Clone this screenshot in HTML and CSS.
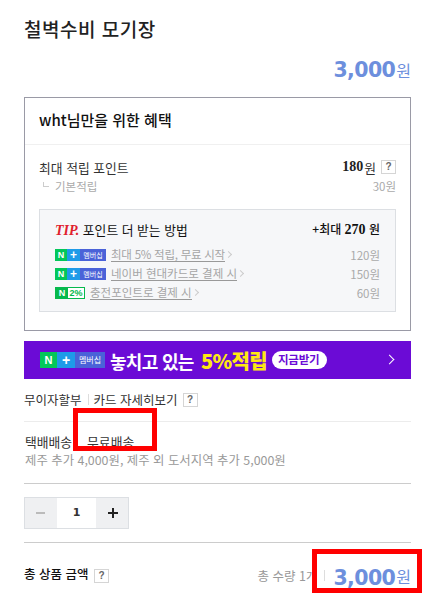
FILE: index.html
```html
<!DOCTYPE html>
<html lang="ko">
<head>
    <meta charset="UTF-8" />
    <title>철벽수비 모기장</title>
    <link rel="stylesheet" href="styles.css">
</head>
<body>
<div class="page">
    <h2 class="title">철벽수비 모기장</h2>
    <div class="price-top"><span class="num">3,000</span><span class="won">원</span></div>

    <div class="benefit">
        <div class="benefit-head">wht님만을 위한 혜택</div>
        <div class="benefit-body">
            <div class="row max-row">
                <span>최대 적립 포인트</span>
                <span class="row-right"><b class="amount">180</b>원 <i class="help">?</i></span>
            </div>
            <div class="row base-row">
                <span class="base-label"><i class="corner"></i>기본적립</span>
                <span>30원</span>
            </div>
            <div class="tip">
                <div class="row tip-head">
                    <span><em class="tip-mark">TIP.</em> 포인트 더 받는 방법</span>
                    <span class="tip-max">+최대 <b class="amount">270</b> 원</span>
                </div>
                <div class="row tip-row">
                    <span class="tip-link">
                        <span class="badge"><i class="b-n">N</i><i class="b-plus">+</i><i class="b-member">멤버십</i></span>
                        <a class="tight">최대 5% 적립, 무료 시작</a><i class="chev"></i>
                    </span>
                    <span>120원</span>
                </div>
                <div class="row tip-row">
                    <span class="tip-link">
                        <span class="badge"><i class="b-n">N</i><i class="b-plus">+</i><i class="b-member">멤버십</i></span>
                        <a>네이버 현대카드로 결제 시</a><i class="chev"></i>
                    </span>
                    <span>150원</span>
                </div>
                <div class="row tip-row">
                    <span class="tip-link">
                        <span class="badge badge-charge"><i class="b-n">N</i><i class="b-pct">2%</i></span>
                        <a>충전포인트로 결제 시</a><i class="chev"></i>
                    </span>
                    <span>60원</span>
                </div>
            </div>
        </div>
    </div>

    <div class="banner">
        <span class="badge badge-big"><i class="b-n">N</i><i class="b-plus">+</i><i class="b-member">멤버십</i></span>
        <span class="banner-text">놓치고 있는 <b>5%적립</b></span>
        <span class="banner-pill">지금받기</span>
        <i class="banner-chev"></i>
    </div>

    <div class="card-info">
        <span>무이자할부</span><i class="sep"></i><span>카드 자세히보기</span><i class="help">?</i>
    </div>

    <div class="delivery">
        <div class="delivery-top"><span>택배배송</span><i class="sep"></i><span>무료배송</span></div>
        <div class="delivery-extra">제주 추가 4,000원, 제주 외 도서지역 추가 5,000원</div>
    </div>

    <div class="qty-wrap">
        <div class="qty">
            <span class="qty-btn minus"></span>
            <span class="qty-num">1</span>
            <span class="qty-btn plus"></span>
        </div>
    </div>

    <div class="total">
        <span class="total-label">총 상품 금액 <i class="help">?</i></span>
        <span class="total-right">
            <span class="total-count">총 수량 1개</span><i class="sep"></i>
            <span class="num">3,000</span><span class="won">원</span>
        </span>
    </div>

    <div class="mark mark-delivery"></div>
    <div class="mark mark-total"></div>
</div>
</body>
</html>
```

FILE: styles.css
```css
* {
    box-sizing: border-box;
}

body {
    margin: 0;
    background-color: white;
    font-family: "Noto Sans CJK KR", "Liberation Sans", sans-serif;
    font-size: 12px;
    color: #333;
}

i, em {
    font-style: normal;
}

.page {
    position: relative;
    width: 424px;
    height: 593px;
    padding: 0 13px 0 24px;
    overflow: hidden;
}

.title {
    margin: 0;
    padding-top: 16px;
    height: 56px;
    font-size: 19px;
    line-height: 26px;
    letter-spacing: 0.5px;
    font-weight: 500;
    color: #222;
}

.price-top {
    height: 41px;
    text-align: right;
    line-height: 28px;
    color: #6d8fdd;
}

.num {
    font-family: "DejaVu Sans", sans-serif;
    font-weight: bold;
    font-size: 20.5px;
    color: #6d8fdd;
    letter-spacing: -0.6px;
}

.won {
    font-size: 16px;
    color: #6d8fdd;
    margin-left: 1px;
}

.row {
    display: flex;
    justify-content: space-between;
    align-items: center;
}

.benefit {
    border: 1px solid #9a9aa6;
    height: 234px;
}

.benefit-head {
    height: 47px;
    padding: 0 14px;
    line-height: 43px;
    font-size: 15px;
    font-weight: 500;
    color: #111;
    border-bottom: 1px solid #f0f0f0;
}

.benefit-body {
    padding: 12px 14px 0;
}

.max-row {
    height: 20px;
    font-size: 12.8px;
}

.row-right {
    display: flex;
    align-items: center;
    gap: 1px;
}

.amount {
    font-family: "Liberation Serif", serif;
    font-weight: bold;
    font-size: 14px;
    color: #222;
}

.help {
    display: inline-block;
    width: 15px;
    height: 14px;
    margin-left: 4px;
    border: 1px solid #d5d5d5;
    background-color: white;
    font-family: "Liberation Sans", sans-serif;
    font-size: 10px;
    font-weight: bold;
    line-height: 12px;
    text-align: center;
    color: #666;
}

.base-row {
    height: 17px;
    font-size: 11.5px;
    color: #aaa;
}

.base-label {
    display: flex;
    align-items: center;
}

.corner {
    width: 6px;
    height: 5px;
    margin: 0 6px 2px 4px;
    border-left: 1px solid #ccc;
    border-bottom: 1px solid #ccc;
}

.tip {
    margin-top: 15px;
    height: 103px;
    padding: 8px 15px 0 15px;
    background-color: #f6f7f9;
    border: 1px solid #dcdfe3;
}

.tip-head {
    height: 22px;
    margin-bottom: 5px;
    font-size: 12.8px;
    color: #111;
}

.tip-max {
    font-size: 12px;
    font-weight: 500;
}

.tip-max .amount {
    color: #111;
}

.tip-mark {
    font-family: "Liberation Serif", serif;
    font-style: italic;
    font-weight: bold;
    font-size: 14px;
    color: #e0202d;
}

.tip-row {
    height: 19px;
    font-size: 11.5px;
    color: #aaa;
}

.tip-link {
    display: flex;
    align-items: center;
}

.tip-link a {
    margin-left: 5px;
    color: #a5a5a5;
    border-bottom: 1px solid #999;
    line-height: 13px;
}

.tip-link .tight {
    letter-spacing: -0.25px;
}

.chev {
    width: 5px;
    height: 5px;
    margin-left: 1px;
    border-top: 1px solid #ccc;
    border-right: 1px solid #ccc;
    transform: rotate(45deg);
}

.badge {
    display: flex;
    height: 12px;
    font-family: "Liberation Sans", sans-serif;
    font-size: 9px;
    line-height: 12px;
    font-weight: bold;
    text-align: center;
    color: white;
}

.b-n {
    width: 12px;
    background-color: #03c75a;
}

.b-plus {
    width: 13px;
    font-size: 12px;
    background-color: #1e9be8;
}

.b-member {
    width: 26px;
    font-family: "Noto Sans CJK KR", sans-serif;
    font-size: 7px;
    font-weight: 400;
    background-color: #4a62d8;
}

.badge-charge {
    border: 1px solid #06b94d;
    height: 12px;
    line-height: 10px;
}

.badge-charge .b-n {
    width: 12px;
    background-color: #06b94d;
}

.b-pct {
    width: 16px;
    font-size: 9px;
    color: #06b94d;
    background-color: white;
}

.banner {
    position: relative;
    display: flex;
    align-items: center;
    height: 38px;
    margin-top: 10px;
    padding-left: 16px;
    background-color: #6b0bd6;
}

.badge-big {
    height: 16px;
    line-height: 16px;
    font-size: 11px;
}

.badge-big .b-n {
    width: 17px;
}

.badge-big .b-plus {
    width: 18px;
    font-size: 14px;
}

.badge-big .b-member {
    width: 30px;
    font-size: 8px;
    background-color: #4a62d8;
}

.banner-text {
    margin-left: 5px;
    font-size: 18px;
    font-weight: 700;
    letter-spacing: -0.7px;
    color: white;
}

.banner-text b {
    margin-left: 3px;
    font-size: 20px;
    color: #ffe812;
}

.banner-pill {
    margin-left: 5px;
    padding: 0 6px;
    width: 55px;
    height: 18px;
    line-height: 17px;
    border-radius: 9px;
    background-color: white;
    font-size: 11.5px;
    font-weight: 700;
    letter-spacing: -0.2px;
    white-space: nowrap;
    color: #6b0bd6;
}

.banner-chev {
    position: absolute;
    right: 18px;
    top: 15px;
    width: 7px;
    height: 7px;
    border-top: 1px solid white;
    border-right: 1px solid white;
    transform: rotate(45deg);
}

.card-info {
    display: flex;
    align-items: center;
    height: 43px;
    padding-bottom: 1px;
    font-size: 12.5px;
    border-bottom: 1px solid #ececec;
}

.card-info .help {
    margin-left: 5px;
}

.sep {
    width: 1px;
    height: 11px;
    margin: 0 5px 0 6px;
    background-color: #ddd;
}

.delivery {
    height: 62px;
    padding-top: 9px;
    border-bottom: 1px solid #ccc;
}

.delivery-top {
    display: flex;
    align-items: center;
    height: 20px;
    padding-left: 1px;
    font-size: 12.8px;
}

.delivery-top .sep {
    background-color: white;
    margin: 0 7px;
}

.delivery-extra {
    line-height: 18px;
    font-size: 12.4px;
    padding-left: 1px;
    color: #999;
}

.qty-wrap {
    height: 59px;
    padding-top: 13px;
    border-bottom: 1px solid #ccc;
}

.qty {
    display: flex;
    width: 105px;
    height: 32px;
    border: 1px solid #dcdfe3;
}

.qty-btn {
    position: relative;
    width: 32px;
    background-color: #eff0f2;
}

.qty-btn::before {
    content: "";
    position: absolute;
    left: 11px;
    top: 14px;
    width: 9px;
    height: 2px;
    background-color: #bbb;
}

.plus::before {
    left: 12px;
    width: 10px;
    background-color: #222;
}

.plus::after {
    content: "";
    position: absolute;
    left: 16px;
    top: 10px;
    width: 2px;
    height: 10px;
    background-color: #222;
}

.qty-num {
    flex: 1;
    text-align: center;
    line-height: 30px;
    font-family: "DejaVu Sans", sans-serif;
    font-size: 11px;
    font-weight: bold;
}

.total {
    display: flex;
    justify-content: space-between;
    align-items: center;
    height: 50px;
    padding-top: 10px;
}

.total-label {
    font-size: 12.5px;
    font-weight: 500;
    color: #111;
}

.total-label .help {
    margin-left: 2px;
}

.total-right {
    display: flex;
    align-items: center;
    padding-top: 5px;
}

.total-count {
    font-size: 12.5px;
    color: #999;
}

.total-right .sep {
    margin: 0 8px 0 7px;
}

.total-right .num {
    margin-top: 4px;
}

.mark {
    position: absolute;
    border: 5px solid #ff0000;
}

.mark-delivery {
    left: 73px;
    top: 408px;
    width: 84px;
    height: 43px;
}

.mark-total {
    left: 312px;
    top: 549px;
    width: 110px;
    height: 44px;
}
```
